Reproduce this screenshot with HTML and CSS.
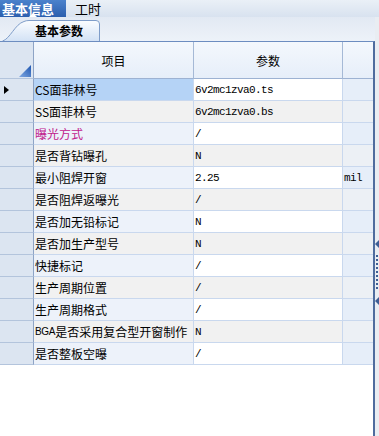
FILE: index.html
```html
<!DOCTYPE html>
<html lang="zh">
<head>
    <meta charset="UTF-8">
    <title>基本信息</title>
    <link rel="stylesheet" href="styles.css">
</head>
<body>
    <div class="topbar">
        <div class="toptab active">基本信息</div>
        <div class="toptab">工时</div>
    </div>

    <div class="body-row">
        <div class="main">
            <div class="subbar">
                <div class="subtab">
                    <svg class="subtab-shape" width="98" height="21" viewBox="0 0 98 21">
                        <defs>
                            <linearGradient id="tabGrad" x1="0" y1="0" x2="0" y2="1">
                                <stop offset="0" stop-color="#fbfdff"/>
                                <stop offset="1" stop-color="#d3e2f5"/>
                            </linearGradient>
                        </defs>
                        <path d="M0.5,21 C8,19 13,4 22,1.5 Q24,0.5 27,0.5 L94,0.5 Q97.5,0.5 97.5,4 L97.5,21" fill="url(#tabGrad)" stroke="#7f9dc9"/>
                    </svg>
                    <span class="subtab-label">基本参数</span>
                </div>
            </div>

            <div class="grid-area">
                <div class="grid">
                    <div class="cell hd ind">
                        <svg width="12" height="12" viewBox="0 0 12 12">
                            <defs>
                                <linearGradient id="triGrad" x1="0" y1="1" x2="1" y2="0">
                                    <stop offset="0" stop-color="#7fa8e2"/>
                                    <stop offset="1" stop-color="#1f56b0"/>
                                </linearGradient>
                            </defs>
                            <path d="M12,0 L12,12 L0,12 Z" fill="url(#triGrad)"/>
                        </svg>
                    </div>
                    <div class="cell hd">项目</div>
                    <div class="cell hd">参数</div>
                    <div class="cell hd last"></div>

                    <div class="cell ind odd">
                        <svg width="5" height="8" viewBox="0 0 5 8"><path d="M0,0 L5,4 L0,8 Z" fill="#000"/></svg>
                    </div>
                    <div class="cell name sel">CS面菲林号</div>
                    <div class="cell val odd">6v2mc1zva0.ts</div>
                    <div class="cell unit odd"></div>

                    <div class="cell ind even"></div>
                    <div class="cell name even">SS面菲林号</div>
                    <div class="cell val even">6v2mc1zva0.bs</div>
                    <div class="cell unit even"></div>

                    <div class="cell ind odd"></div>
                    <div class="cell name odd pink">曝光方式</div>
                    <div class="cell val odd">/</div>
                    <div class="cell unit odd"></div>

                    <div class="cell ind even"></div>
                    <div class="cell name even">是否背钻曝孔</div>
                    <div class="cell val even">N</div>
                    <div class="cell unit even"></div>

                    <div class="cell ind odd"></div>
                    <div class="cell name odd">最小阻焊开窗</div>
                    <div class="cell val odd">2.25</div>
                    <div class="cell unit odd">mil</div>

                    <div class="cell ind even"></div>
                    <div class="cell name even">是否阻焊返曝光</div>
                    <div class="cell val even">/</div>
                    <div class="cell unit even"></div>

                    <div class="cell ind odd"></div>
                    <div class="cell name odd">是否加无铅标记</div>
                    <div class="cell val odd">N</div>
                    <div class="cell unit odd"></div>

                    <div class="cell ind even"></div>
                    <div class="cell name even">是否加生产型号</div>
                    <div class="cell val even">N</div>
                    <div class="cell unit even"></div>

                    <div class="cell ind odd"></div>
                    <div class="cell name odd">快捷标记</div>
                    <div class="cell val odd">/</div>
                    <div class="cell unit odd"></div>

                    <div class="cell ind even"></div>
                    <div class="cell name even">生产周期位置</div>
                    <div class="cell val even">/</div>
                    <div class="cell unit even"></div>

                    <div class="cell ind odd"></div>
                    <div class="cell name odd">生产周期格式</div>
                    <div class="cell val odd">/</div>
                    <div class="cell unit odd"></div>

                    <div class="cell ind even"></div>
                    <div class="cell name even"><span class="small">BGA</span>是否采用复合型开窗制作</div>
                    <div class="cell val even">N</div>
                    <div class="cell unit even"></div>

                    <div class="cell ind odd"></div>
                    <div class="cell name odd">是否整板空曝</div>
                    <div class="cell val odd">/</div>
                    <div class="cell unit odd"></div>
                </div>
            </div>
        </div>

        <div class="splitter">
            <span class="grip-arrow"></span>
            <span class="grip-dots"></span>
            <span class="grip-arrow"></span>
        </div>
    </div>
</body>
</html>
```

FILE: styles.css
```css
:root {
    --line-color: #c9d8ee;
    --ind-color: #dce5f1;
    --odd-name: #edf2fa;
    --even-bg: #f1f1f1;
    --unit-odd: #e6eef9;
    --unit-even: #ecf0f5;
    --sel-color: #b5d3f6;
    --frame-color: #4f6c9e;
}

html, body {
    margin: 0;
    padding: 0;
}

body {
    width: 379px;
    height: 436px;
    overflow: hidden;
    background: #fff;
    font-family: "Noto Sans CJK SC", sans-serif;
    font-size: 12px;
    color: #000;
}

.topbar {
    height: 17px;
    display: flex;
    align-items: stretch;
    background: linear-gradient(#eaf0f7, #d8e2ef);
}

.toptab {
    position: relative;
    font-size: 13px;
    line-height: 17px;
    padding: 0 6px 0 9px;
}

.toptab.active {
    width: 66px;
    box-sizing: border-box;
    padding: 0 0 0 2px;
    background: linear-gradient(#4b82cc, #2c5fae);
    color: #fff;
    font-weight: bold;
}

.toptab.active::after {
    content: "";
    position: absolute;
    left: 29px;
    bottom: 0;
    border-left: 4px solid transparent;
    border-right: 4px solid transparent;
    border-bottom: 4px solid #fff;
}

.body-row {
    display: flex;
    height: 419px;
}

.main {
    width: 375px;
    display: flex;
    flex-direction: column;
}

.splitter {
    width: 4px;
    background: #e9edf2;
    display: flex;
    flex-direction: column;
    align-items: flex-end;
    padding-top: 223px;
    box-sizing: border-box;
}

.grip-arrow {
    width: 0;
    height: 0;
    border-top: 4px solid transparent;
    border-bottom: 4px solid transparent;
    border-right: 4px solid #3f5f95;
}

.grip-dots {
    width: 2px;
    height: 36px;
    margin: 7px 1px 6px 0;
    background: repeating-linear-gradient(#3f5f95 0 2px, transparent 2px 4px);
}

.subbar {
    height: 24px;
    display: flex;
    align-items: flex-end;
    background: linear-gradient(#e2e9f3, #edf2f9);
    padding-left: 2px;
}

.subtab {
    display: grid;
    width: 98px;
    height: 21px;
}

.subtab-shape,
.subtab-label {
    grid-area: 1 / 1;
}

.subtab-label {
    font-weight: bold;
    font-size: 12px;
    line-height: 21px;
    padding-left: 33px;
}

.grid-area {
    flex: 1;
    border-top: 1px solid #6d8dc0;
    border-right: 2px solid var(--frame-color);
    background: #fff;
}

.grid {
    display: grid;
    grid-template-columns: 34px 160px 149px 30px;
    grid-template-rows: 37px;
    grid-auto-rows: 22px;
}

.cell {
    box-sizing: border-box;
    border-right: 1px solid var(--line-color);
    border-bottom: 1px solid var(--line-color);
    display: flex;
    align-items: center;
    white-space: nowrap;
    overflow: hidden;
}

.cell.hd {
    justify-content: center;
    background: linear-gradient(#f4f8fd, #e6eef9);
    border-right-color: #a5b9d6;
    border-bottom-color: #9db2d2;
}

.cell.hd.ind {
    justify-content: flex-end;
    align-items: flex-end;
    padding: 0 2px 1px 0;
}

.cell.last,
.cell.unit {
    border-right: none;
}

.cell.ind {
    background: var(--ind-color);
    border-right-color: #8ea4c6;
    border-bottom-color: #b3c4dc;
    padding-left: 4px;
}

.cell.name {
    padding-left: 1px;
}

.cell.name.odd { background: var(--odd-name); }
.cell.name.even { background: var(--even-bg); }
.cell.name.sel { background: var(--sel-color); }

.cell.val,
.cell.unit {
    font-family: "Liberation Mono", monospace;
    font-size: 11px;
    letter-spacing: -0.6px;
    padding-left: 1px;
}

.cell.val.odd { background: #fff; }
.cell.val.even { background: var(--even-bg); }
.cell.unit.odd { background: var(--unit-odd); }
.cell.unit.even { background: var(--unit-even); }

.pink {
    color: #c0208c;
}

.small {
    font-family: "Liberation Sans", sans-serif;
    font-size: 10px;
    letter-spacing: -0.3px;
}
```
